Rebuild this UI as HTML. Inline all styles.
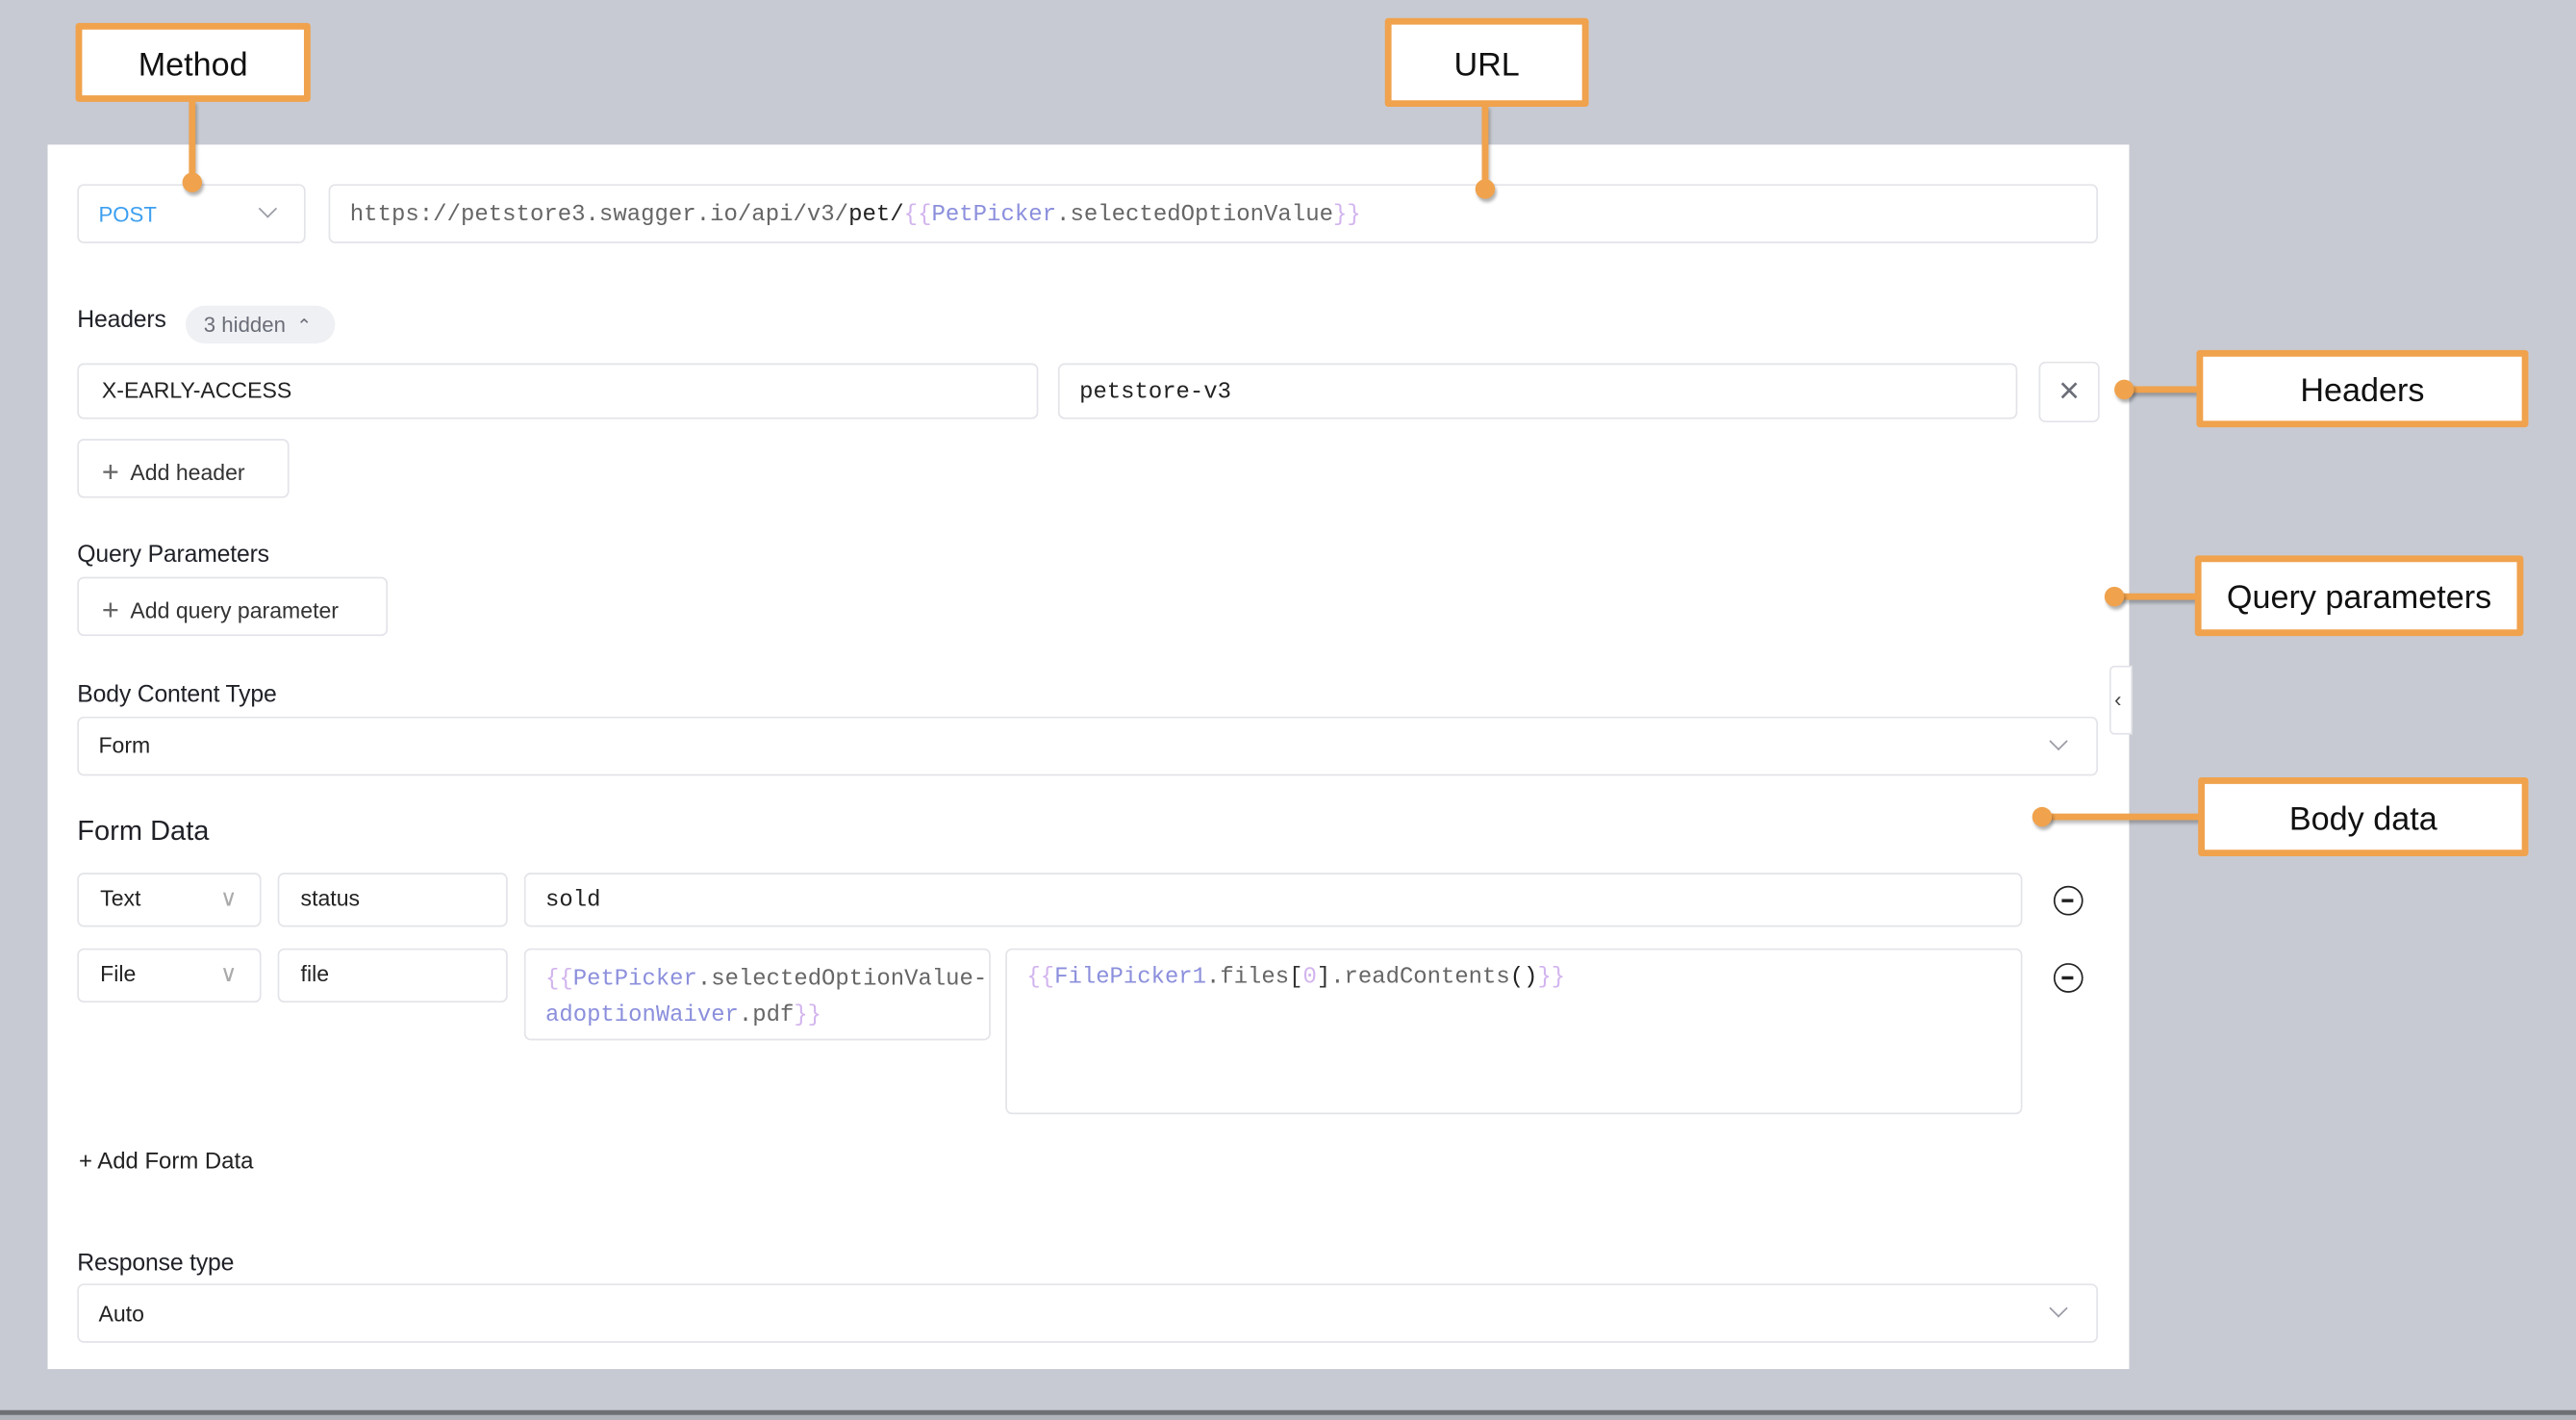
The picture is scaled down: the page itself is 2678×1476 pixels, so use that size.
<!DOCTYPE html>
<html><head><meta charset="utf-8"><style>
*{box-sizing:border-box;margin:0;padding:0}
html,body{width:2678px;height:1476px;overflow:hidden;background:#c7cad2}
#w{position:absolute;left:0;top:0;width:1568px;height:864px;transform:scale(1.70791,1.70833);transform-origin:0 0;font-family:"Liberation Sans",sans-serif;color:#222}
.a{position:absolute}
.panel{left:29px;top:88px;width:1267px;height:745px;background:#fff}
.box{position:absolute;border:1px solid #e3e4e9;border-radius:4px;background:#fff;font-size:13.5px}
.mono{font-family:"Liberation Mono",monospace}
.lbl{position:absolute;font-size:14.5px;color:#1f2127;letter-spacing:-.1px}
.call{position:absolute;border:4px solid #f0a24d;background:#fff;border-radius:2px;font-size:20px;color:#111;display:flex;align-items:center;justify-content:center;padding-top:4px}
.dot{position:absolute;width:12px;height:12px;border-radius:50%;background:#f0a24d;box-shadow:1px 2px 2px rgba(0,0,0,.3)}
.ln{position:absolute;background:#f0a24d;box-shadow:1px 2px 2px rgba(0,0,0,.25)}
.br{color:#d2b4ee}.id{color:#8b8fdc}.g{color:#666}
.chev{position:absolute;width:8px;height:8px;border-right:1.6px solid #9a9ca6;border-bottom:1.6px solid #9a9ca6;transform:rotate(45deg)}
.minus{position:absolute;width:18px;height:18px;border:1.6px solid #222;border-radius:50%}
.minus:after{content:"";position:absolute;left:4px;top:7px;width:7px;height:1.6px;background:#222}
</style></head><body><div id="w">
<div class="a panel"></div>
<div class="a" style="left:0;top:858px;width:1568px;height:3px;background:#6d6f74"></div>
<div class="a" style="left:0;top:861px;width:1568px;height:3px;background:#b0b3ba"></div>

<div class="box" style="left:47px;top:112px;width:139px;height:36px"><span class="a" style="left:12px;top:10px;color:#3d9ff0;font-size:13px">POST</span><div class="chev" style="left:111px;top:10px"></div></div>
<div class="box mono" style="left:200px;top:112px;width:1077px;height:36px;font-size:14.05px;padding:10px 0 0 12px;white-space:nowrap;color:#666">https://petstore3.swagger.io/api/v3/<span style="color:#222">pet/</span><span class="br">{{</span><span class="id">PetPicker</span>.selectedOptionValue<span class="br">}}</span></div>

<div class="lbl" style="left:47px;top:187px">Headers</div>
<div class="a" style="left:113px;top:186px;width:91px;height:23px;border-radius:12px;background:#eef0f3;font-size:13px;color:#6b6e78;padding:4px 0 0 11px">3 hidden <span style="font-size:11px;margin-left:3px">&#8963;</span></div>
<div class="box" style="left:47px;top:221px;width:585px;height:34px;padding:8px 0 0 14px">X-EARLY-ACCESS</div>
<div class="box mono" style="left:644px;top:221px;width:584px;height:34px;padding:9px 0 0 12px;font-size:14px">petstore-v3</div>
<div class="box" style="left:1241px;top:220px;width:37px;height:37px;color:#6b6e78;font-size:22px;text-align:center;line-height:34px">×</div>
<div class="box" style="left:47px;top:267px;width:129px;height:36px;padding:8px 0 0 14px;color:#333"><span style="font-size:18px;color:#666;position:relative;top:1px">+</span>&nbsp; Add header</div>

<div class="lbl" style="left:47px;top:330px">Query Parameters</div>
<div class="box" style="left:47px;top:351px;width:189px;height:36px;padding:8px 0 0 14px;color:#333"><span style="font-size:18px;color:#666;position:relative;top:1px">+</span>&nbsp; Add query parameter</div>

<div class="lbl" style="left:47px;top:415px">Body Content Type</div>
<div class="box" style="left:47px;top:436px;width:1230px;height:36px;padding:9px 0 0 12px">Form<div class="chev" style="left:1201px;top:10px"></div></div>
<div class="box" style="left:1284px;top:405px;width:14px;height:42px;border-radius:3px 0 0 3px;font-size:13px;color:#444;padding:12px 0 0 2px">&#8249;</div>

<div class="a" style="left:47px;top:496px;font-size:17px;color:#1f2127">Form Data</div>
<div class="box" style="left:47px;top:531px;width:112px;height:33px;padding:7px 0 0 13px">Text<span class="a" style="left:86px;top:6px;color:#aaa;font-size:14px">&#8744;</span></div>
<div class="box" style="left:169px;top:531px;width:140px;height:33px;padding:7px 0 0 13px">status</div>
<div class="box mono" style="left:319px;top:531px;width:912px;height:33px;padding:8px 0 0 12px;font-size:14px">sold</div>
<div class="minus" style="left:1250px;top:539px"></div>

<div class="box" style="left:47px;top:577px;width:112px;height:33px;padding:7px 0 0 13px">File<span class="a" style="left:86px;top:6px;color:#aaa;font-size:14px">&#8744;</span></div>
<div class="box" style="left:169px;top:577px;width:140px;height:33px;padding:7px 0 0 13px">file</div>
<div class="box mono" style="left:319px;top:577px;width:284px;height:56px;padding:7px 0 0 12px;font-size:14px;line-height:22px;color:#666;white-space:nowrap"><span class="br">{{</span><span class="id">PetPicker</span>.selectedOptionValue-<br><span class="id">adoptionWaiver</span>.pdf<span class="br">}}</span></div>
<div class="box mono" style="left:612px;top:577px;width:619px;height:101px;padding:9px 0 0 12px;font-size:14px;color:#666;white-space:nowrap"><span class="br">{{</span><span class="id">FilePicker1</span>.files<span style="color:#333">[</span><span class="br">0</span><span style="color:#333">]</span>.readContents<span style="color:#222">()</span><span class="br">}}</span></div>
<div class="minus" style="left:1250px;top:586px"></div>

<div class="a" style="left:48px;top:698px;font-size:14px;color:#222">+ Add Form Data</div>

<div class="lbl" style="left:47px;top:761px">Response type</div>
<div class="box" style="left:47px;top:781px;width:1230px;height:36px;padding:10px 0 0 12px">Auto<div class="chev" style="left:1201px;top:10px"></div></div>

<div class="ln" style="left:115px;top:61px;width:4px;height:50px"></div>
<div class="dot" style="left:111px;top:105px"></div>
<div class="call" style="left:46px;top:14px;width:143px;height:48px">Method</div>
<div class="ln" style="left:902px;top:64px;width:4px;height:50px"></div>
<div class="dot" style="left:898px;top:109px"></div>
<div class="call" style="left:843px;top:11px;width:124px;height:54px">URL</div>

<div class="ln" style="left:1293px;top:235px;width:46px;height:4px"></div>
<div class="dot" style="left:1287px;top:231px"></div>
<div class="call" style="left:1337px;top:213px;width:202px;height:47px">Headers</div>
<div class="ln" style="left:1287px;top:361px;width:50px;height:4px"></div>
<div class="dot" style="left:1281px;top:357px"></div>
<div class="call" style="left:1336px;top:338px;width:200px;height:49px">Query parameters</div>
<div class="ln" style="left:1243px;top:495px;width:96px;height:4px"></div>
<div class="dot" style="left:1237px;top:491px"></div>
<div class="call" style="left:1338px;top:473px;width:201px;height:48px">Body data</div>
</div></body></html>
